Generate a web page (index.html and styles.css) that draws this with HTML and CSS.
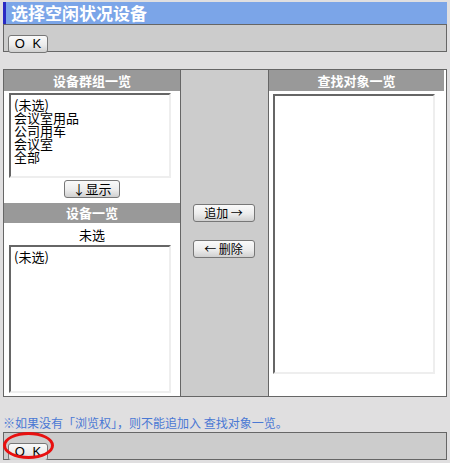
FILE: index.html
```html
<!DOCTYPE html>
<html lang="zh-CN">
<head>
    <meta charset="UTF-8">
    <title>选择空闲状况设备</title>
    <link rel="stylesheet" href="styles.css">
</head>
<body>
    <div class="page">
        <h1 class="title">选择空闲状况设备</h1>
        <div class="toolbar">
            <button class="btn btn-ok">O K</button>
        </div>

        <div class="panel">
            <div class="col col-left">
                <div class="col-head">设备群组一览</div>
                <div class="listbox listbox-groups">
                    <div>(未选)</div>
                    <div>会议室用品</div>
                    <div>公司用车</div>
                    <div>会议室</div>
                    <div>全部</div>
                </div>
                <div class="show-row">
                    <button class="btn btn-show">↓显示</button>
                </div>
                <div class="col-head col-head-sub">设备一览</div>
                <div class="sub-label">未选</div>
                <div class="listbox listbox-items">
                    <div>(未选)</div>
                </div>
            </div>

            <div class="col col-mid">
                <button class="btn btn-move">追加 →</button>
                <button class="btn btn-move">← 删除</button>
            </div>

            <div class="col col-right">
                <div class="col-head">查找对象一览</div>
                <div class="listbox listbox-targets"></div>
            </div>
        </div>

        <p class="note">※如果没有「浏览权」，则不能追加入 查找对象一览。</p>

        <div class="toolbar toolbar-bottom">
            <button class="btn btn-ok">O K</button>
            <span class="mark"></span>
        </div>
    </div>
</body>
</html>
```

FILE: styles.css
```css
body {
    margin: 0;
    background-color: #e0dfe0;
    font-family: "Noto Sans CJK SC", "Liberation Sans", sans-serif;
    color: #000;
}

.page {
    width: 444px;
    padding: 2px 0 0 3px;
}

.title {
    margin: 0;
    height: 22px;
    line-height: 22px;
    padding-left: 5px;
    border-left: 3px solid #2a2ac4;
    background-color: #7ba5e8;
    color: #fff;
    font-size: 17px;
    font-weight: bold;
}

.toolbar {
    position: relative;
    padding: 4px 0 0 4px;
    box-sizing: border-box;
    height: 28px;
    border: 1px solid #666;
    background-color: #ccc;
}

.btn {
    display: inline-block;
    height: 18px;
    padding: 0;
    border: 1px solid #777;
    border-radius: 3px;
    background: linear-gradient(#fafafa, #ececec 55%, #d0d0d0);
    font-family: "Noto Sans CJK SC", "Liberation Sans", sans-serif;
    font-size: 12px;
    line-height: 16px;
    color: #000;
}

.btn-ok {
    width: 40px;
    font-family: "Liberation Sans", sans-serif;
    font-size: 13px;
    letter-spacing: 2px;
    text-indent: 2px;
}

.panel {
    display: grid;
    grid-template-columns: 176px 89px 175px;
    margin-top: 17px;
    height: 328px;
    box-sizing: border-box;
    border: 1px solid #666;
    background-color: #fff;
}

.col-head {
    height: 21px;
    line-height: 21px;
    background-color: #999;
    color: #fff;
    font-size: 13px;
    font-weight: bold;
    text-align: center;
}

.listbox {
    box-sizing: border-box;
    border: 2px solid;
    border-color: #666 #eee #eee #666;
    background-color: #fff;
    padding: 3px 0 0 3px;
    font-size: 13px;
    line-height: 13px;
}

.listbox-groups {
    width: 162px;
    height: 85px;
    margin: 2px 0 0 5px;
}

.show-row {
    display: flex;
    justify-content: center;
    padding-top: 2px;
}

.btn-show {
    width: 56px;
    font-size: 13px;
}

.col-head-sub {
    margin-top: 5px;
    height: 20px;
    line-height: 20px;
}

.sub-label {
    height: 22px;
    line-height: 24px;
    font-size: 13px;
    text-align: center;
}

.listbox-items {
    width: 162px;
    height: 148px;
    margin-left: 5px;
}

.col-mid {
    display: flex;
    flex-direction: column;
    align-items: center;
    gap: 18px;
    padding-top: 134px;
    padding-right: 2px;
    border-left: 1px solid #666;
    border-right: 1px solid #666;
    background-color: #ccc;
}

.btn-move {
    width: 62px;
    font-size: 12px;
}

.listbox-targets {
    width: 162px;
    height: 280px;
    margin: 3px 0 0 4px;
}

.note {
    margin: 17px 0 0;
    height: 18px;
    line-height: 18px;
    font-size: 12px;
    color: #4a78d4;
    white-space: nowrap;
}

.mark {
    position: absolute;
    left: -1px;
    top: -1px;
    width: 51px;
    height: 27px;
    box-sizing: border-box;
    border: 3px solid #e81010;
    border-radius: 50%;
}
```
